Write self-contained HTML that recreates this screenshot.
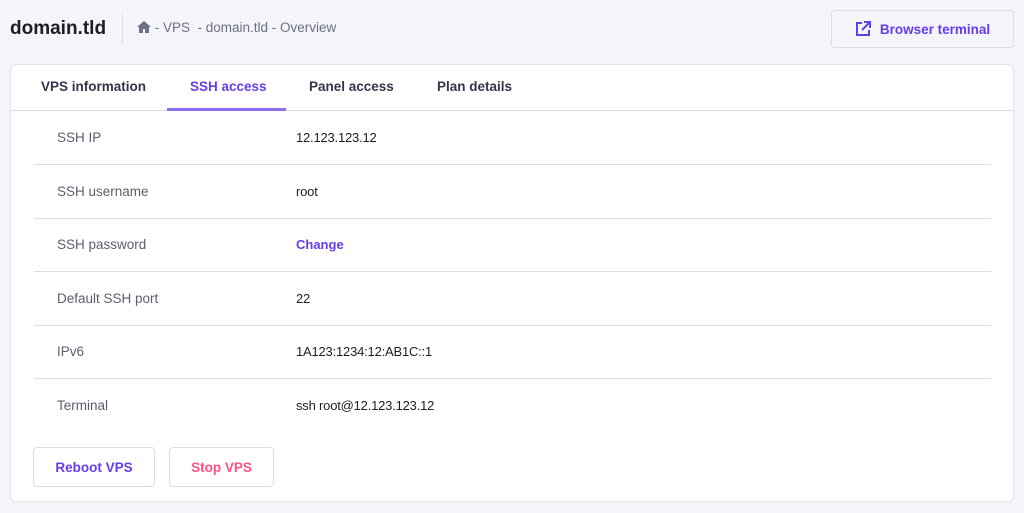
<!DOCTYPE html>
<html><head><style>
*{box-sizing:border-box;margin:0;padding:0}
body{width:1024px;height:513px;background:#f4f4fb;font-family:"Liberation Sans",sans-serif;position:relative;overflow:hidden;color:#2f1c6a}
.abs{position:absolute}
.title{left:10px;top:18px;font-size:19px;font-weight:bold;color:#1d1e20}
.sep{left:122px;top:14px;width:1px;height:30px;background:#dcdce6}
.bc{left:137px;top:20px;font-size:13.5px;color:#6d7081}
.bt{left:831px;top:10px;width:183px;height:38px;border:1px solid #dcdce6;border-radius:4px;background:#f4f4fb;color:#673de6;font-weight:bold;font-size:13.5px;display:flex;align-items:center;justify-content:center;gap:9px}
.card{left:10px;top:64px;width:1004px;height:438px;background:#fff;border:1px solid #e3e3ea;border-radius:6px}
.tabs{left:0;top:0;width:1002px;height:46px;border-bottom:1px solid #dcdce6}
.tab{position:absolute;top:14px;font-size:13.5px;font-weight:bold;color:#36344d}
.row{position:absolute;left:23px;width:957px;height:54px;border-bottom:1px solid #dcdce6;font-size:13.5px}
.row span{position:absolute;top:19px}
.l{left:23px;color:#5c5e6e}
.v{left:262px;color:#1d1e20;font-size:13px;letter-spacing:-0.2px}
.btn{position:absolute;top:382px;height:40px;border:1px solid #dcdce6;border-radius:4px;font-weight:bold;font-size:13.5px;display:flex;align-items:center;justify-content:center}
</style></head><body>
<div class="abs title">domain.tld</div>
<div class="abs sep"></div>
<div class="abs bc"><svg width="14" height="12" viewBox="0 0 14 12" style="vertical-align:-1px"><path d="M7 0L0 6h2v6h4V8h2v4h4V6h2z" fill="#6d7081"/></svg> - VPS &nbsp;- domain.tld - Overview</div>
<div class="abs bt"><svg width="16" height="16" viewBox="0 0 16 16"><path d="M7 2H2v12h12V9" fill="none" stroke="#673de6" stroke-width="2"/><path d="M9 1h6v6M15 1L7 9" fill="none" stroke="#673de6" stroke-width="2"/></svg>Browser terminal</div>
<div class="abs card">
<div class="abs tabs">
<div class="tab" style="left:30px">VPS information</div>
<div class="tab" style="left:179px;color:#673de6">SSH access</div>
<div class="abs" style="left:156px;top:43px;width:119px;height:3px;background:#8c6cf0"></div>
<div class="tab" style="left:298px">Panel access</div>
<div class="tab" style="left:426px">Plan details</div>
</div>
<div class="row" style="top:46px"><span class="l">SSH IP</span><span class="v">12.123.123.12</span></div>
<div class="row" style="top:100px"><span class="l">SSH username</span><span class="v">root</span></div>
<div class="row" style="top:153px"><span class="l">SSH password</span><span class="v" style="color:#673de6;font-weight:bold;letter-spacing:0">Change</span></div>
<div class="row" style="top:207px"><span class="l">Default SSH port</span><span class="v">22</span></div>
<div class="row" style="top:260px"><span class="l">IPv6</span><span class="v">1A123:1234:12:AB1C::1</span></div>
<div class="row" style="top:314px;border-bottom:none"><span class="l">Terminal</span><span class="v">ssh root@12.123.123.12</span></div>
<div class="btn" style="left:22px;width:122px;color:#673de6">Reboot VPS</div>
<div class="btn" style="left:158px;width:105px;color:#fc5185">Stop VPS</div>
</div>
</body></html>
